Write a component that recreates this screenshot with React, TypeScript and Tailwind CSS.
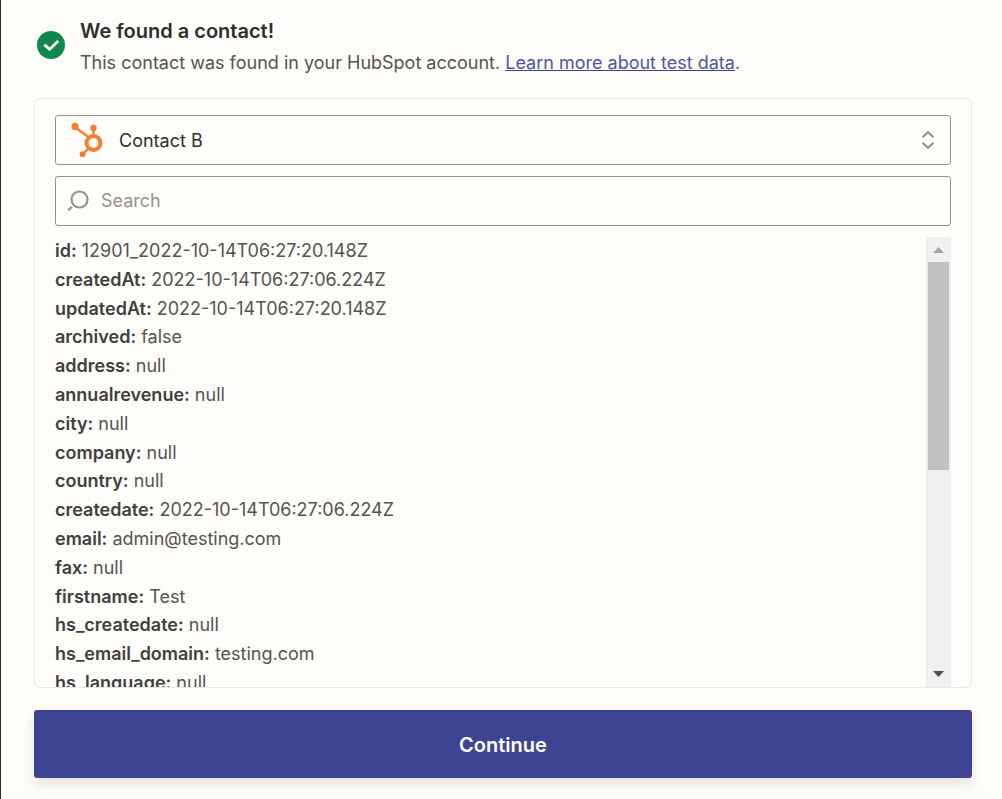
import { useState } from "react"

const contactFields = [
    { name: "id", value: "12901_2022-10-14T06:27:20.148Z" },
    { name: "createdAt", value: "2022-10-14T06:27:06.224Z" },
    { name: "updatedAt", value: "2022-10-14T06:27:20.148Z" },
    { name: "archived", value: "false" },
    { name: "address", value: "null" },
    { name: "annualrevenue", value: "null" },
    { name: "city", value: "null" },
    { name: "company", value: "null" },
    { name: "country", value: "null" },
    { name: "createdate", value: "2022-10-14T06:27:06.224Z" },
    { name: "email", value: "admin@testing.com" },
    { name: "fax", value: "null" },
    { name: "firstname", value: "Test" },
    { name: "hs_createdate", value: "null" },
    { name: "hs_email_domain", value: "testing.com" },
    { name: "hs_language", value: "null" },
]

const CheckIcon = () => (
    <svg viewBox="0 0 28 28" className="w-7 h-7 shrink-0" aria-hidden="true">
        <circle cx="14" cy="14" r="14" fill="#0f884e" />
        <path d="M7.4 13.6 12.6 18.4 21.2 10" fill="none" stroke="#fffdf9" strokeWidth="2.8" />
    </svg>
)

const HubSpotIcon = () => (
    <svg viewBox="0 0 34 36" className="w-[34px] h-9" aria-hidden="true">
        <g stroke="#f57f2e" fill="none">
            <path d="M4 5 18 15.5" strokeWidth="2.4" />
            <path d="M22.5 6V14" strokeWidth="2.4" />
            <path d="M18 26 12 32" strokeWidth="2.4" />
            <circle cx="22.5" cy="21" r="6.9" strokeWidth="4" />
        </g>
        <g fill="#f57f2e">
            <circle cx="4" cy="4.4" r="3.6" />
            <circle cx="22.5" cy="6" r="3.2" />
            <circle cx="11.5" cy="32.2" r="2.9" />
        </g>
    </svg>
)

const SearchIcon = () => (
    <svg viewBox="0 0 22 22" className="w-[22px] h-[22px] shrink-0" fill="none" stroke="#95928e" strokeWidth="2.2" aria-hidden="true">
        <circle cx="12.5" cy="9.5" r="8" />
        <path d="M4.8 16.8 1.2 20.4" strokeWidth="2.6" strokeDasharray="2.2 0.4" />
    </svg>
)

const SortIcon = () => (
    <svg viewBox="0 0 12 20" className="w-3 h-5" fill="none" stroke="#95928e" strokeWidth="2.2" aria-hidden="true">
        <path d="M0.5 7.2 6 2.2 11.5 7.2" />
        <path d="M0.5 12.8 6 17.8 11.5 12.8" />
    </svg>
)

const ScrollTrack = () => (
    <div className="w-[25px] shrink-0 bg-[#f0f0f0] flex flex-col items-center" aria-hidden="true">
        <svg viewBox="0 0 11 6" className="w-[11px] h-1.5 mt-2.5 mb-[9px]">
            <path d="M0 6 5.5 0 11 6Z" fill="#a3a3a3" />
        </svg>
        <div className="w-[21px] h-[208px] bg-[#c1c1c1]" />
        <svg viewBox="0 0 11 6" className="w-[11px] h-1.5 mt-auto mb-2.5">
            <path d="M0 0 5.5 6 11 0Z" fill="#505050" />
        </svg>
    </div>
)

const App = () => {
    const [search, setSearch] = useState("")
    const fields = contactFields.filter((field) =>
        `${field.name} ${field.value}`.toLowerCase().includes(search.toLowerCase())
    )

    return (
        <main className="min-h-screen border-l border-[#2d2e2e] bg-[#fffdf9] pl-[33px] pr-[30px] pt-4 font-['Inter',sans-serif] text-lg text-[#55534f]">
            <header className="flex items-start gap-[15px] pl-[3px]">
                <div className="pt-[15px]">
                    <CheckIcon />
                </div>
                <div>
                    <h1 className="text-xl leading-[30px] font-semibold text-[#2d2e2e]">We found a contact!</h1>
                    <p className="leading-[34px]">
                        This contact was found in your HubSpot account.{" "}
                        <a href="#" className="text-[#4f569e] underline decoration-[#3d4592]">Learn more about test data</a>.
                    </p>
                </div>
            </header>

            <section className="mt-[18px] flex flex-col gap-[11px] rounded-md border border-[#e8e7e4] px-5 pt-4">
                <div className="relative">
                    <select aria-label="Contact" className="w-full h-[50px] appearance-none rounded-[3px] border border-[#95928e] bg-transparent pl-[63px] pr-12 pt-px text-[#2d2e2e]">
                        <option>Contact B</option>
                    </select>
                    <div className="pointer-events-none absolute inset-y-0 left-4 flex items-center">
                        <HubSpotIcon />
                    </div>
                    <div className="pointer-events-none absolute inset-y-0 right-[17px] flex items-center">
                        <SortIcon />
                    </div>
                </div>
                <label className="flex h-[50px] items-center gap-3 rounded-[3px] border border-[#95928e] px-[11px]">
                    <SearchIcon />
                    <input
                        type="text"
                        aria-label="Search"
                        placeholder="Search"
                        value={search}
                        onChange={(e) => setSearch(e.target.value)}
                        className="min-w-0 flex-1 bg-transparent outline-none placeholder:text-[#95928e]"
                    />
                </label>
                <div className="flex h-[450px]">
                    <ul className="flex-1 overflow-hidden leading-[1.6]">
                        {fields.map((field) => (
                            <li key={field.name}>
                                <span className="font-semibold text-[#403f3e]">{field.name}:</span> {field.value}
                            </li>
                        ))}
                    </ul>
                    <ScrollTrack />
                </div>
            </section>

            <button type="button" className="mt-[22px] h-[68px] w-full rounded-[3px] bg-[#3d4592] pt-0.5 text-xl font-semibold text-[#fffdf9] shadow-[0_6px_12px_rgba(45,46,46,0.12)]">
                Continue
            </button>
        </main>
    )
}

export default App
